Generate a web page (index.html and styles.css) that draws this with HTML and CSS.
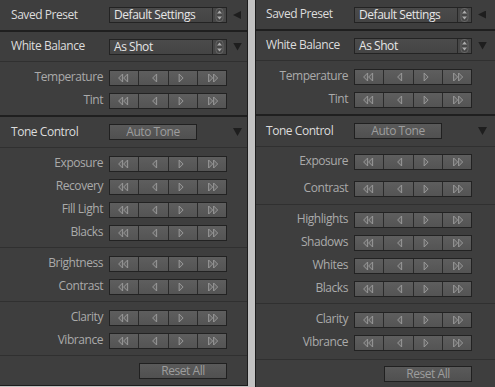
FILE: index.html
```html
<!DOCTYPE html>
<html lang="en">
<head>
    <meta charset="UTF-8">
    <title>Basic Panel</title>
    <link rel="stylesheet" href="styles.css">
</head>
<body>
    <!-- formas compartidas -->
    <svg class="defs" width="0" height="0">
        <defs>
            <g id="ll"><polygon points="-1.5,-4 -5.5,0 -1.5,4"/><polygon points="3.5,-4 -0.5,0 3.5,4"/></g>
            <g id="l"><polygon points="3.5,-4 -0.5,0 3.5,4"/></g>
            <g id="r"><polygon points="-4,-4 0,0 -4,4"/></g>
            <g id="rr"><polygon points="-3.5,-4 0.5,0 -3.5,4"/><polygon points="1.5,-4 5.5,0 1.5,4"/></g>
            <g id="ud"><rect class="pill" x="-3.5" y="-6.5" width="7" height="13" rx="3"/><polygon class="arr" points="0,-4.5 2.5,-1.5 -2.5,-1.5"/><polygon class="arr" points="0,4.5 2.5,1.5 -2.5,1.5"/></g>
        </defs>
    </svg>

    <div class="screen">
        <div class="panel izq">
            <div class="row head">
                <span class="title">Saved Preset</span>
                <div class="select">Default Settings<svg class="spin"><use href="#ud" x="50%" y="50%"/></svg></div>
                <span class="tri tri-left"></span>
            </div>
            <div class="sep"></div>
            <div class="row head short">
                <span class="title">White Balance</span>
                <div class="select">As Shot<svg class="spin"><use href="#ud" x="50%" y="50%"/></svg></div>
                <span class="tri tri-down"></span>
            </div>
            <div class="subsep"></div>
            <div class="group">
                <div class="row"><span class="label">Temperature</span><div class="step"><svg><use href="#ll" x="50%" y="50%"/></svg><svg><use href="#l" x="50%" y="50%"/></svg><svg><use href="#r" x="50%" y="50%"/></svg><svg><use href="#rr" x="50%" y="50%"/></svg></div></div>
                <div class="row"><span class="label">Tint</span><div class="step"><svg><use href="#ll" x="50%" y="50%"/></svg><svg><use href="#l" x="50%" y="50%"/></svg><svg><use href="#r" x="50%" y="50%"/></svg><svg><use href="#rr" x="50%" y="50%"/></svg></div></div>
            </div>
            <div class="sep"></div>
            <div class="row head">
                <span class="title">Tone Control</span>
                <div class="btn auto">Auto Tone</div>
                <span class="tri tri-down"></span>
            </div>
            <div class="subsep"></div>
            <div class="group">
                <div class="row"><span class="label">Exposure</span><div class="step"><svg><use href="#ll" x="50%" y="50%"/></svg><svg><use href="#l" x="50%" y="50%"/></svg><svg><use href="#r" x="50%" y="50%"/></svg><svg><use href="#rr" x="50%" y="50%"/></svg></div></div>
                <div class="row"><span class="label">Recovery</span><div class="step"><svg><use href="#ll" x="50%" y="50%"/></svg><svg><use href="#l" x="50%" y="50%"/></svg><svg><use href="#r" x="50%" y="50%"/></svg><svg><use href="#rr" x="50%" y="50%"/></svg></div></div>
                <div class="row"><span class="label">Fill Light</span><div class="step"><svg><use href="#ll" x="50%" y="50%"/></svg><svg><use href="#l" x="50%" y="50%"/></svg><svg><use href="#r" x="50%" y="50%"/></svg><svg><use href="#rr" x="50%" y="50%"/></svg></div></div>
                <div class="row"><span class="label">Blacks</span><div class="step"><svg><use href="#ll" x="50%" y="50%"/></svg><svg><use href="#l" x="50%" y="50%"/></svg><svg><use href="#r" x="50%" y="50%"/></svg><svg><use href="#rr" x="50%" y="50%"/></svg></div></div>
            </div>
            <div class="subsep"></div>
            <div class="group">
                <div class="row"><span class="label">Brightness</span><div class="step"><svg><use href="#ll" x="50%" y="50%"/></svg><svg><use href="#l" x="50%" y="50%"/></svg><svg><use href="#r" x="50%" y="50%"/></svg><svg><use href="#rr" x="50%" y="50%"/></svg></div></div>
                <div class="row"><span class="label">Contrast</span><div class="step"><svg><use href="#ll" x="50%" y="50%"/></svg><svg><use href="#l" x="50%" y="50%"/></svg><svg><use href="#r" x="50%" y="50%"/></svg><svg><use href="#rr" x="50%" y="50%"/></svg></div></div>
            </div>
            <div class="subsep"></div>
            <div class="group">
                <div class="row"><span class="label">Clarity</span><div class="step"><svg><use href="#ll" x="50%" y="50%"/></svg><svg><use href="#l" x="50%" y="50%"/></svg><svg><use href="#r" x="50%" y="50%"/></svg><svg><use href="#rr" x="50%" y="50%"/></svg></div></div>
                <div class="row"><span class="label">Vibrance</span><div class="step"><svg><use href="#ll" x="50%" y="50%"/></svg><svg><use href="#l" x="50%" y="50%"/></svg><svg><use href="#r" x="50%" y="50%"/></svg><svg><use href="#rr" x="50%" y="50%"/></svg></div></div>
            </div>
            <div class="subsep"></div>
            <div class="row foot">
                <div class="btn reset">Reset All</div>
            </div>
        </div>

        <div class="panel der">
            <div class="row head short">
                <span class="title">Saved Preset</span>
                <div class="select">Default Settings<svg class="spin"><use href="#ud" x="50%" y="50%"/></svg></div>
                <span class="tri tri-left"></span>
            </div>
            <div class="sep"></div>
            <div class="row head short">
                <span class="title">White Balance</span>
                <div class="select">As Shot<svg class="spin"><use href="#ud" x="50%" y="50%"/></svg></div>
                <span class="tri tri-down"></span>
            </div>
            <div class="subsep"></div>
            <div class="group">
                <div class="row"><span class="label">Temperature</span><div class="step"><svg><use href="#ll" x="50%" y="50%"/></svg><svg><use href="#l" x="50%" y="50%"/></svg><svg><use href="#r" x="50%" y="50%"/></svg><svg><use href="#rr" x="50%" y="50%"/></svg></div></div>
                <div class="row"><span class="label">Tint</span><div class="step"><svg><use href="#ll" x="50%" y="50%"/></svg><svg><use href="#l" x="50%" y="50%"/></svg><svg><use href="#r" x="50%" y="50%"/></svg><svg><use href="#rr" x="50%" y="50%"/></svg></div></div>
            </div>
            <div class="sep"></div>
            <div class="row head">
                <span class="title">Tone Control</span>
                <div class="btn auto">Auto Tone</div>
                <span class="tri tri-down"></span>
            </div>
            <div class="subsep"></div>
            <div class="group wide">
                <div class="row"><span class="label">Exposure</span><div class="step"><svg><use href="#ll" x="50%" y="50%"/></svg><svg><use href="#l" x="50%" y="50%"/></svg><svg><use href="#r" x="50%" y="50%"/></svg><svg><use href="#rr" x="50%" y="50%"/></svg></div></div>
                <div class="row"><span class="label">Contrast</span><div class="step"><svg><use href="#ll" x="50%" y="50%"/></svg><svg><use href="#l" x="50%" y="50%"/></svg><svg><use href="#r" x="50%" y="50%"/></svg><svg><use href="#rr" x="50%" y="50%"/></svg></div></div>
            </div>
            <div class="subsep"></div>
            <div class="group tight">
                <div class="row"><span class="label">Highlights</span><div class="step"><svg><use href="#ll" x="50%" y="50%"/></svg><svg><use href="#l" x="50%" y="50%"/></svg><svg><use href="#r" x="50%" y="50%"/></svg><svg><use href="#rr" x="50%" y="50%"/></svg></div></div>
                <div class="row"><span class="label">Shadows</span><div class="step"><svg><use href="#ll" x="50%" y="50%"/></svg><svg><use href="#l" x="50%" y="50%"/></svg><svg><use href="#r" x="50%" y="50%"/></svg><svg><use href="#rr" x="50%" y="50%"/></svg></div></div>
                <div class="row"><span class="label">Whites</span><div class="step"><svg><use href="#ll" x="50%" y="50%"/></svg><svg><use href="#l" x="50%" y="50%"/></svg><svg><use href="#r" x="50%" y="50%"/></svg><svg><use href="#rr" x="50%" y="50%"/></svg></div></div>
                <div class="row"><span class="label">Blacks</span><div class="step"><svg><use href="#ll" x="50%" y="50%"/></svg><svg><use href="#l" x="50%" y="50%"/></svg><svg><use href="#r" x="50%" y="50%"/></svg><svg><use href="#rr" x="50%" y="50%"/></svg></div></div>
            </div>
            <div class="subsep"></div>
            <div class="group last">
                <div class="row"><span class="label">Clarity</span><div class="step"><svg><use href="#ll" x="50%" y="50%"/></svg><svg><use href="#l" x="50%" y="50%"/></svg><svg><use href="#r" x="50%" y="50%"/></svg><svg><use href="#rr" x="50%" y="50%"/></svg></div></div>
                <div class="row"><span class="label">Vibrance</span><div class="step"><svg><use href="#ll" x="50%" y="50%"/></svg><svg><use href="#l" x="50%" y="50%"/></svg><svg><use href="#r" x="50%" y="50%"/></svg><svg><use href="#rr" x="50%" y="50%"/></svg></div></div>
            </div>
            <div class="subsep"></div>
            <div class="row foot">
                <div class="btn reset">Reset All</div>
            </div>
        </div>
    </div>
</body>
</html>
```

FILE: styles.css
```css
* {
    box-sizing: border-box;
}
body {
    margin: 0;
    width: 495px;
    height: 387px;
    overflow: hidden;
    background: #c2c2c2;
    font-family: "Open Sans", "Noto Sans", sans-serif;
    font-size: 12px;
    letter-spacing: -0.45px;
    color: #aaaaaa;
}
.defs {
    position: absolute;
}
.screen {
    display: flex;
    gap: 7px;
    height: 387px;
}
.panel {
    display: flex;
    flex-direction: column;
    flex: none;
    margin-top: -1px;
    background: #3e3e3e;
    border: 1px solid #1c1c1c;
}
.izq {
    --lab: 103px;
    width: 249px;
    height: 387px;
    margin-left: -1px;
}
.der {
    --lab: 92px;
    width: 250px;
    height: 392px;
}
.row {
    display: grid;
    grid-template-columns: var(--lab) 118px 1fr;
    column-gap: 6px;
    align-items: center;
    height: 23px;
}
.row.head {
    height: 30px;
}
.row.head.short {
    height: 29px;
}
.row.foot {
    height: 29px;
}
.der .row.foot {
    height: 27px;
}
.title {
    padding-left: 11px;
    padding-bottom: 2px;
    color: #dcdcdc;
    white-space: nowrap;
}
.der .title {
    padding-left: 10px;
}
.label {
    padding-bottom: 2px;
    text-align: right;
    white-space: nowrap;
}
.sep {
    height: 2px;
    background: #1f1f1f;
    flex: none;
}
.subsep {
    height: 1px;
    background: #303030;
    flex: none;
}
.group {
    padding: 4px 0 3px;
}
.group.wide {
    padding: 3px 0 4px;
}
.group.wide .row + .row {
    margin-top: 4px;
}
.group.tight {
    padding: 3px 0;
}
.group.last {
    padding: 4px 0 5px;
}

/* desplegables */
.select {
    position: relative;
    height: 16px;
    padding-left: 4px;
    line-height: 13px;
    color: #e6e6e6;
    background: linear-gradient(#4b4b4b, #444);
    border: 1px solid #232323;
}
.spin {
    position: absolute;
    top: 0;
    right: 0;
    width: 14px;
    height: 14px;
    border-left: 1px solid #282828;
    background: #474747;
}
.pill {
    fill: none;
    stroke: #656565;
}
.arr {
    fill: #ababab;
}

/* botones */
.btn {
    width: 88px;
    height: 16px;
    line-height: 13px;
    text-align: center;
    color: #9d9d9d;
    background: linear-gradient(#5a5a5a, #505050);
    border: 1px solid #202020;
}
.foot .btn {
    grid-column: 2;
    justify-self: end;
}
.tri {
    width: 9px;
    height: 8px;
    background: #1e1e1e;
}
.tri-left {
    width: 8px;
    height: 8px;
    clip-path: polygon(100% 0, 0 50%, 100% 100%);
}
.tri-down {
    clip-path: polygon(0 0, 100% 0, 50% 100%);
}

/* pasos */
.step {
    display: flex;
    height: 16px;
    border: 1px solid #222;
    background: linear-gradient(#5e5e5e, #545454);
}
.step svg {
    flex: 1;
    height: 14px;
    border-left: 1px solid #2b2b2b;
    fill: #626262;
    stroke: #999;
    stroke-width: 1;
}
.step svg:first-child {
    border-left: none;
}
```
